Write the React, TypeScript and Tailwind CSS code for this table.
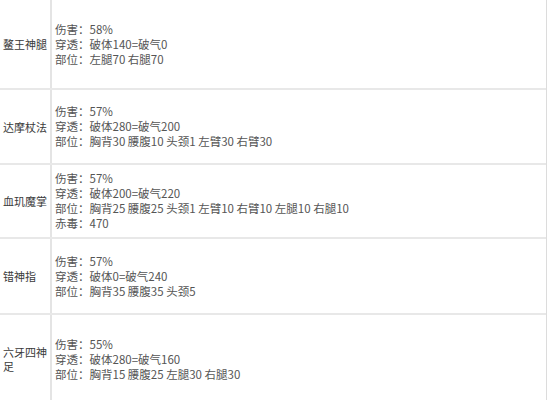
import React from "react";

type Row = {
  name: string;
  h: string;
  lines: string[];
};

const rows: Row[] = [
  {
    name: "鳌王神腿",
    h: "h-[90px]",
    lines: ["伤害：58%", "穿透：破体140=破气0", "部位：左腿70 右腿70"],
  },
  {
    name: "达摩杖法",
    h: "h-[75px]",
    lines: ["伤害：57%", "穿透：破体280=破气200", "部位：胸背30 腰腹10 头颈1 左臂30 右臂30"],
  },
  {
    name: "血玑魔掌",
    h: "h-[74px]",
    lines: [
      "伤害：57%",
      "穿透：破体200=破气220",
      "部位：胸背25 腰腹25 头颈1 左臂10 右臂10 左腿10 右腿10",
      "赤毒：470",
    ],
  },
  {
    name: "错神指",
    h: "h-[76px]",
    lines: ["伤害：57%", "穿透：破体0=破气240", "部位：胸背35 腰腹35 头颈5"],
  },
  {
    name: "六牙四神足",
    h: "h-[90px]",
    lines: ["伤害：55%", "穿透：破体280=破气160", "部位：胸背15 腰腹25 左腿30 右腿30"],
  },
];

const App = () => {
  return (
    <div
      className="w-[548px] h-[400px] overflow-hidden bg-white"
      style={{ fontFamily: '"Noto Sans CJK SC", "Noto Sans", sans-serif' }}
    >
      <div className="w-[547px] border-r border-[#dcdcdc]">
        {rows.map((row) => (
          <div key={row.name} className={`flex ${row.h} border-b-2 border-[#e8e8e8]`}>
            <div className="w-[52px] shrink-0 flex items-center border-r-2 border-[#e4e4e4] pl-[3px] pr-[1px] text-[11px] leading-[14px] text-[#3a3a3a]">
              {row.name}
            </div>
            <div className="flex-1 flex flex-col justify-center pl-[3px] text-[11.5px] leading-[15px] text-[#555]">
              {row.lines.map((l) => (
                <div key={l} className="whitespace-nowrap">
                  {l}
                </div>
              ))}
            </div>
          </div>
        ))}
      </div>
    </div>
  );
};

export default App;
